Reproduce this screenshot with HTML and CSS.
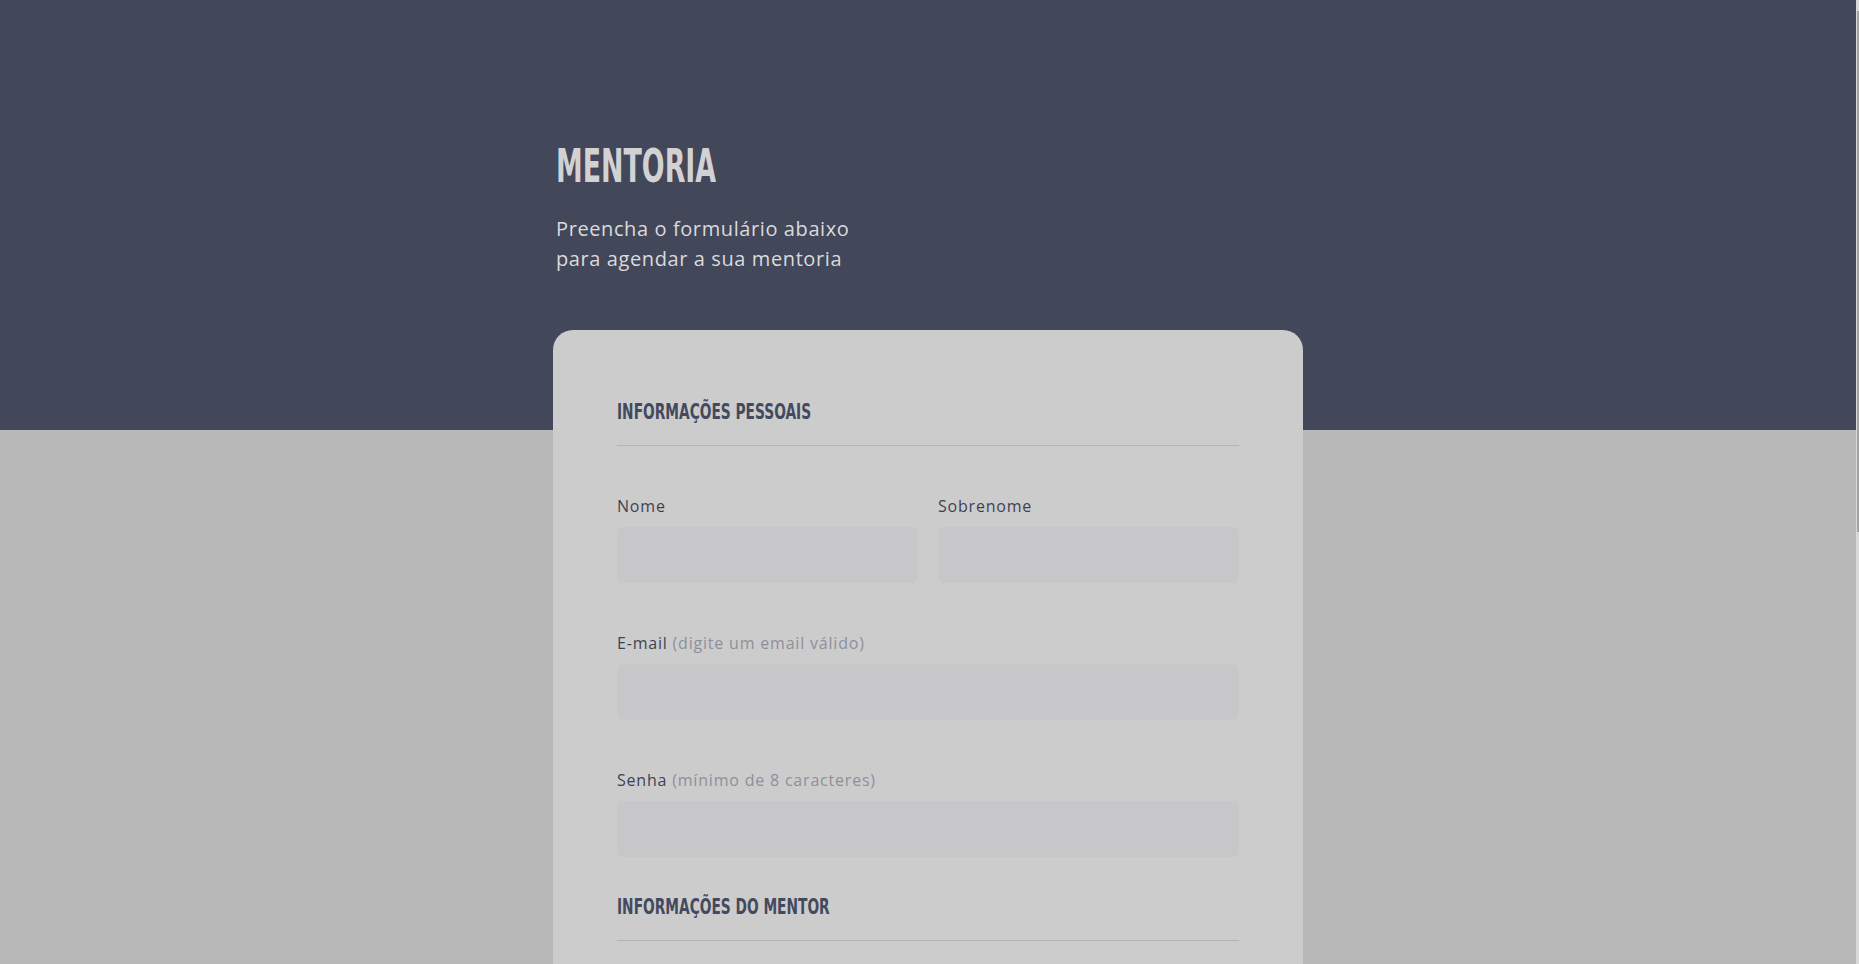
FILE: index.html
```html
<!DOCTYPE html>
<html lang="pt-BR">
<head>
<meta charset="utf-8">
<title>Mentoria</title>
<link rel="stylesheet" href="styles.css">
</head>
<body>
<div class="page">
  <header class="hero">
    <h1 class="title"><span class="condensed title-text">MENTORIA</span></h1>
    <p class="subtitle">Preencha o formulário abaixo<br>para agendar a sua mentoria</p>
  </header>
  <form class="card">
    <section class="section">
      <h2 class="section-title"><span class="condensed section-text">INFORMAÇÕES PESSOAIS</span></h2>
      <div class="row">
        <div class="field">
          <label class="label">Nome</label>
          <input class="input" type="text">
        </div>
        <div class="field">
          <label class="label">Sobrenome</label>
          <input class="input" type="text">
        </div>
      </div>
      <div class="field">
        <label class="label">E-mail <span class="hint">(digite um email válido)</span></label>
        <input class="input" type="email">
      </div>
      <div class="field">
        <label class="label">Senha <span class="hint">(mínimo de 8 caracteres)</span></label>
        <input class="input" type="password">
      </div>
    </section>
    <section class="section">
      <h2 class="section-title"><span class="condensed section-text">INFORMAÇÕES DO MENTOR</span></h2>
      <div class="field">
        <label class="label">Nome do mentor</label>
        <input class="input" type="text">
      </div>
      <div class="field">
        <label class="label">Assunto</label>
        <input class="input" type="text">
      </div>
      <div class="field">
        <label class="label">Data</label>
        <input class="input" type="text">
      </div>
    </section>
  </form>
</div>
<div class="scrollbar"><div class="scrollbar-thumb"></div></div>
</body>
</html>
```

FILE: styles.css
```css
html {
  background: #b8b8b8;
}
body {
  margin: 0;
  padding-right: 3px;
  min-height: 1740px;
  background: linear-gradient(#424759 0, #424759 430px, #b8b8b8 430px);
  font-family: "Open Sans", "Liberation Sans", sans-serif;
}
::-webkit-scrollbar {
  width: 0;
  height: 0;
}
.scrollbar {
  position: fixed;
  top: 0;
  right: 0;
  width: 3px;
  height: 100%;
  background: #d9d9d9;
}
.scrollbar-thumb {
  margin: 11px 0 0 1px;
  width: 2px;
  height: 521px;
  background: #a3a3a3;
}
.page {
  width: 750px;
  margin: 0 auto;
  padding-top: 140px;
  padding-bottom: 80px;
}
.hero {
  padding-left: 3px;
  margin-bottom: 56px;
}
.condensed {
  display: inline-block;
  font-family: "DejaVu Sans", sans-serif;
  font-stretch: condensed;
  font-weight: 700;
  transform-origin: left center;
}
.title {
  margin: 0;
  font-size: 47px;
  line-height: 48px;
  color: #d2d2d4;
}
.title-text {
  transform: scaleX(0.635);
}
.subtitle {
  margin: 24px 0 0;
  font-size: 20px;
  line-height: 30px;
  letter-spacing: 0.6px;
  color: #dadade;
}
.card {
  display: flex;
  flex-direction: column;
  gap: 36px;
  background: #cccccc;
  border-radius: 20px;
  padding: 68px 64px 80px;
}
.section {
  display: flex;
  flex-direction: column;
  gap: 50px;
}
.section-title {
  margin: 0;
  padding-bottom: 21px;
  border-bottom: 1px solid #b6b6ba;
  font-size: 22px;
  line-height: 24px;
  color: #434a5e;
}
.section-text {
  transform: scaleX(0.695);
}
.row {
  display: grid;
  grid-template-columns: 1fr 1fr;
  gap: 20px;
}
.field {
  display: flex;
  flex-direction: column;
  gap: 11px;
}
.label {
  font-size: 16px;
  line-height: 20px;
  letter-spacing: 0.8px;
  color: #3f4253;
}
.hint {
  color: #8f8f9b;
}
.input {
  height: 56px;
  box-sizing: border-box;
  border: 0;
  border-radius: 7px;
  background: #c7c7c9;
  font: inherit;
  padding: 0 16px;
  outline: none;
}
```
